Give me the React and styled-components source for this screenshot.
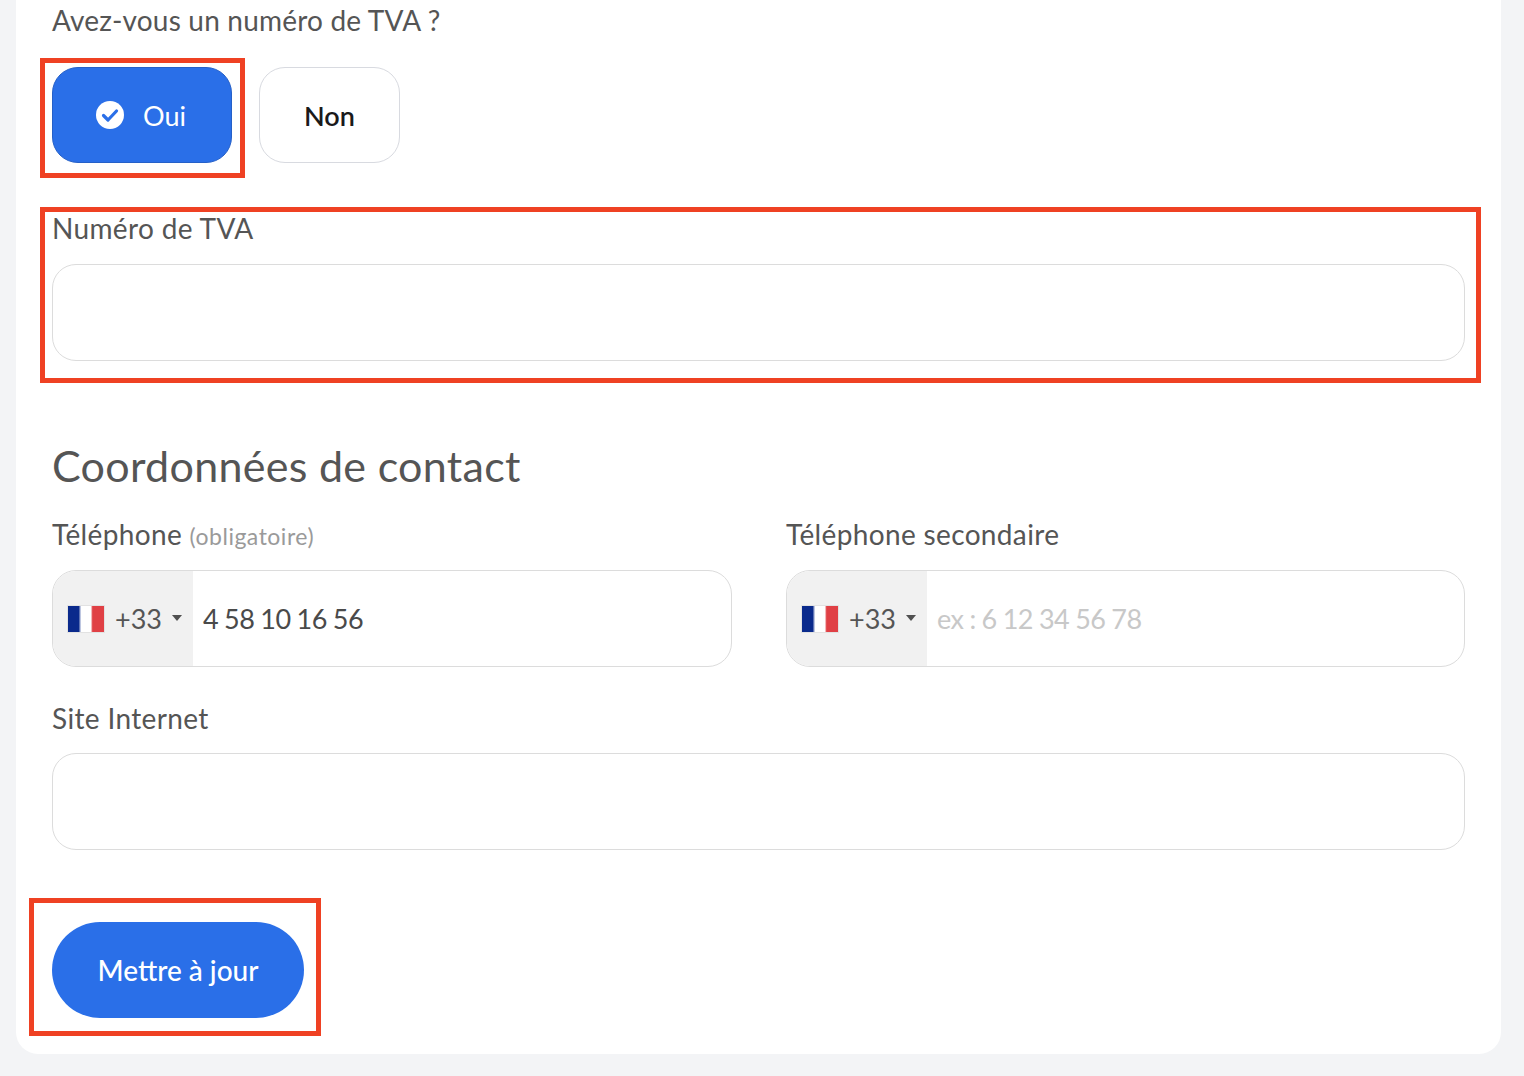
import React from 'react';
import styled, { createGlobalStyle } from 'styled-components';

const GlobalStyle = createGlobalStyle`
  html, body {
    margin: 0;
    padding: 0;
    background: #f3f4f6;
  }
  * {
    box-sizing: border-box;
  }
`;

const Page = styled.div`
  position: relative;
  width: 1524px;
  height: 1076px;
  padding: 0 23px 22px 16px;
  overflow: hidden;
  font-family: Lato, "Open Sans", sans-serif;
  color: #555;
`;

const Card = styled.main`
  height: 1054px;
  padding: 0 36px;
  background: #fff;
  border-radius: 0 0 22px 22px;
`;

const Question = styled.div`
  height: 42px;
  font-size: 28px;
  line-height: 40px;
  letter-spacing: 0.2px;
`;

const Choices = styled.div`
  display: flex;
  gap: 27px;
  margin-top: 25px;
`;

const Choice = styled.button`
  display: flex;
  align-items: center;
  justify-content: center;
  gap: 19px;
  width: ${props => props.$width}px;
  height: 96px;
  padding: 0 ${props => props.$active ? 2 : 0}px 0 0;
  font: inherit;
  font-size: 27px;
  font-weight: ${props => props.$active ? 400 : 600};
  color: ${props => props.$active ? '#fff' : '#1a1a1a'};
  background: ${props => props.$active ? '#2a6fe8' : '#fff'};
  border: 1px solid ${props => props.$active ? '#2560c8' : '#d8dae0'};
  border-radius: 26px;
`;

const Field = styled.div`
  margin-top: ${props => props.$top || 0}px;
  min-width: 0;
`;

const Label = styled.label`
  display: block;
  height: 36px;
  font-size: 28px;
  line-height: 35px;
  letter-spacing: 0.35px;
  white-space: nowrap;
`;

const Hint = styled.span`
  font-size: 23px;
  letter-spacing: 0.5px;
  color: #9a9a9a;
`;

const InputBox = styled.div`
  display: flex;
  align-items: stretch;
  height: 97px;
  margin-top: ${props => props.$top || 0}px;
  overflow: hidden;
  background: #fff;
  border: 1px solid #dcdcdc;
  border-radius: 24px;
`;

const Prefix = styled.div`
  display: flex;
  align-items: center;
  width: 140px;
  padding-left: 14px;
  font-size: 27px;
  color: #555;
  background: #f1f1f1;
`;

const Flag = styled.svg`
  width: 38px;
  height: 28px;
  margin-right: 10px;
  flex-shrink: 0;
`;

const Caret = styled.span`
  width: 0;
  height: 0;
  margin-left: 10px;
  margin-top: -2px;
  border-top: 6px solid #505050;
  border-left: 5px solid transparent;
  border-right: 5px solid transparent;
`;

const Value = styled.div`
  display: flex;
  align-items: center;
  padding-left: 10px;
  font-size: 27px;
  letter-spacing: -0.5px;
  word-spacing: -0.5px;
  color: ${props => props.$placeholder ? '#c8c8c8' : '#4a4a4a'};
`;

const Heading = styled.h2`
  height: 52px;
  margin: 79px 0 0;
  font-size: 43px;
  font-weight: 400;
  line-height: 52px;
  letter-spacing: 0.3px;
  color: #555;
`;

const PhoneRow = styled.div`
  display: grid;
  grid-template-columns: 680px 679px;
  gap: 54px;
  margin-top: 25px;
`;

const SubmitButton = styled.button`
  display: block;
  width: 252px;
  height: 96px;
  margin-top: 72px;
  padding: 0;
  font: inherit;
  font-size: 28px;
  font-weight: 500;
  color: #fff;
  background: #2a6fe8;
  border: none;
  border-radius: 48px;
`;

const Annotation = styled.div`
  position: absolute;
  left: ${props => props.$x}px;
  top: ${props => props.$y}px;
  width: ${props => props.$w}px;
  height: ${props => props.$h}px;
  border: 5px solid #ef4123;
  pointer-events: none;
`;

const CheckIcon = () => (
  <svg width="28" height="28" viewBox="0 0 28 28" aria-hidden="true">
    <circle cx="14" cy="14" r="14" fill="#fff" />
    <path d="M7.5 14.5l4.5 4.5 8.5-9" fill="none" stroke="#2a6fe8" strokeWidth="3.2" strokeLinecap="round" strokeLinejoin="round" />
  </svg>
);

const FranceFlag = () => (
  <Flag viewBox="0 0 38 28" aria-hidden="true">
    <defs>
      <linearGradient id="fr-stripes">
        <stop offset="0.3" stopColor="#0a2a8c" />
        <stop offset="0.37" stopColor="#fff" />
        <stop offset="0.63" stopColor="#fff" />
        <stop offset="0.68" stopColor="#e04045" />
      </linearGradient>
    </defs>
    <rect x="0.5" y="0.5" width="37" height="27" fill="url(#fr-stripes)" stroke="#e2e2e2" strokeWidth="1" />
  </Flag>
);

const PhoneField = ({ label, hint, value, placeholder }) => (
  <Field>
    <Label>
      {label} {hint && <Hint>{hint}</Hint>}
    </Label>
    <InputBox $top={17}>
      <Prefix>
        <FranceFlag />
        +33
        <Caret />
      </Prefix>
      <Value $placeholder={!value}>{value || placeholder}</Value>
    </InputBox>
  </Field>
);

const App = () => (
  <Page>
    <GlobalStyle />
    <Card>
      <Question>Avez-vous un numéro de TVA ?</Question>
      <Choices>
        <Choice $active $width={180}>
          <CheckIcon />
          Oui
        </Choice>
        <Choice $width={141}>Non</Choice>
      </Choices>

      <Field $top={48}>
        <Label>Numéro de TVA</Label>
        <InputBox $top={17} />
      </Field>

      <Heading>Coordonnées de contact</Heading>

      <PhoneRow>
        <PhoneField label="Téléphone" hint="(obligatoire)" value="4 58 10 16 56" />
        <PhoneField label="Téléphone secondaire" placeholder="ex : 6 12 34 56 78" />
      </PhoneRow>

      <Field $top={34}>
        <Label>Site Internet</Label>
        <InputBox $top={16} />
      </Field>

      <SubmitButton>Mettre à jour</SubmitButton>
    </Card>

    <Annotation $x={40} $y={58} $w={205} $h={120} />
    <Annotation $x={40} $y={207} $w={1441} $h={176} />
    <Annotation $x={29} $y={898} $w={292} $h={138} />
  </Page>
);

export default App;
